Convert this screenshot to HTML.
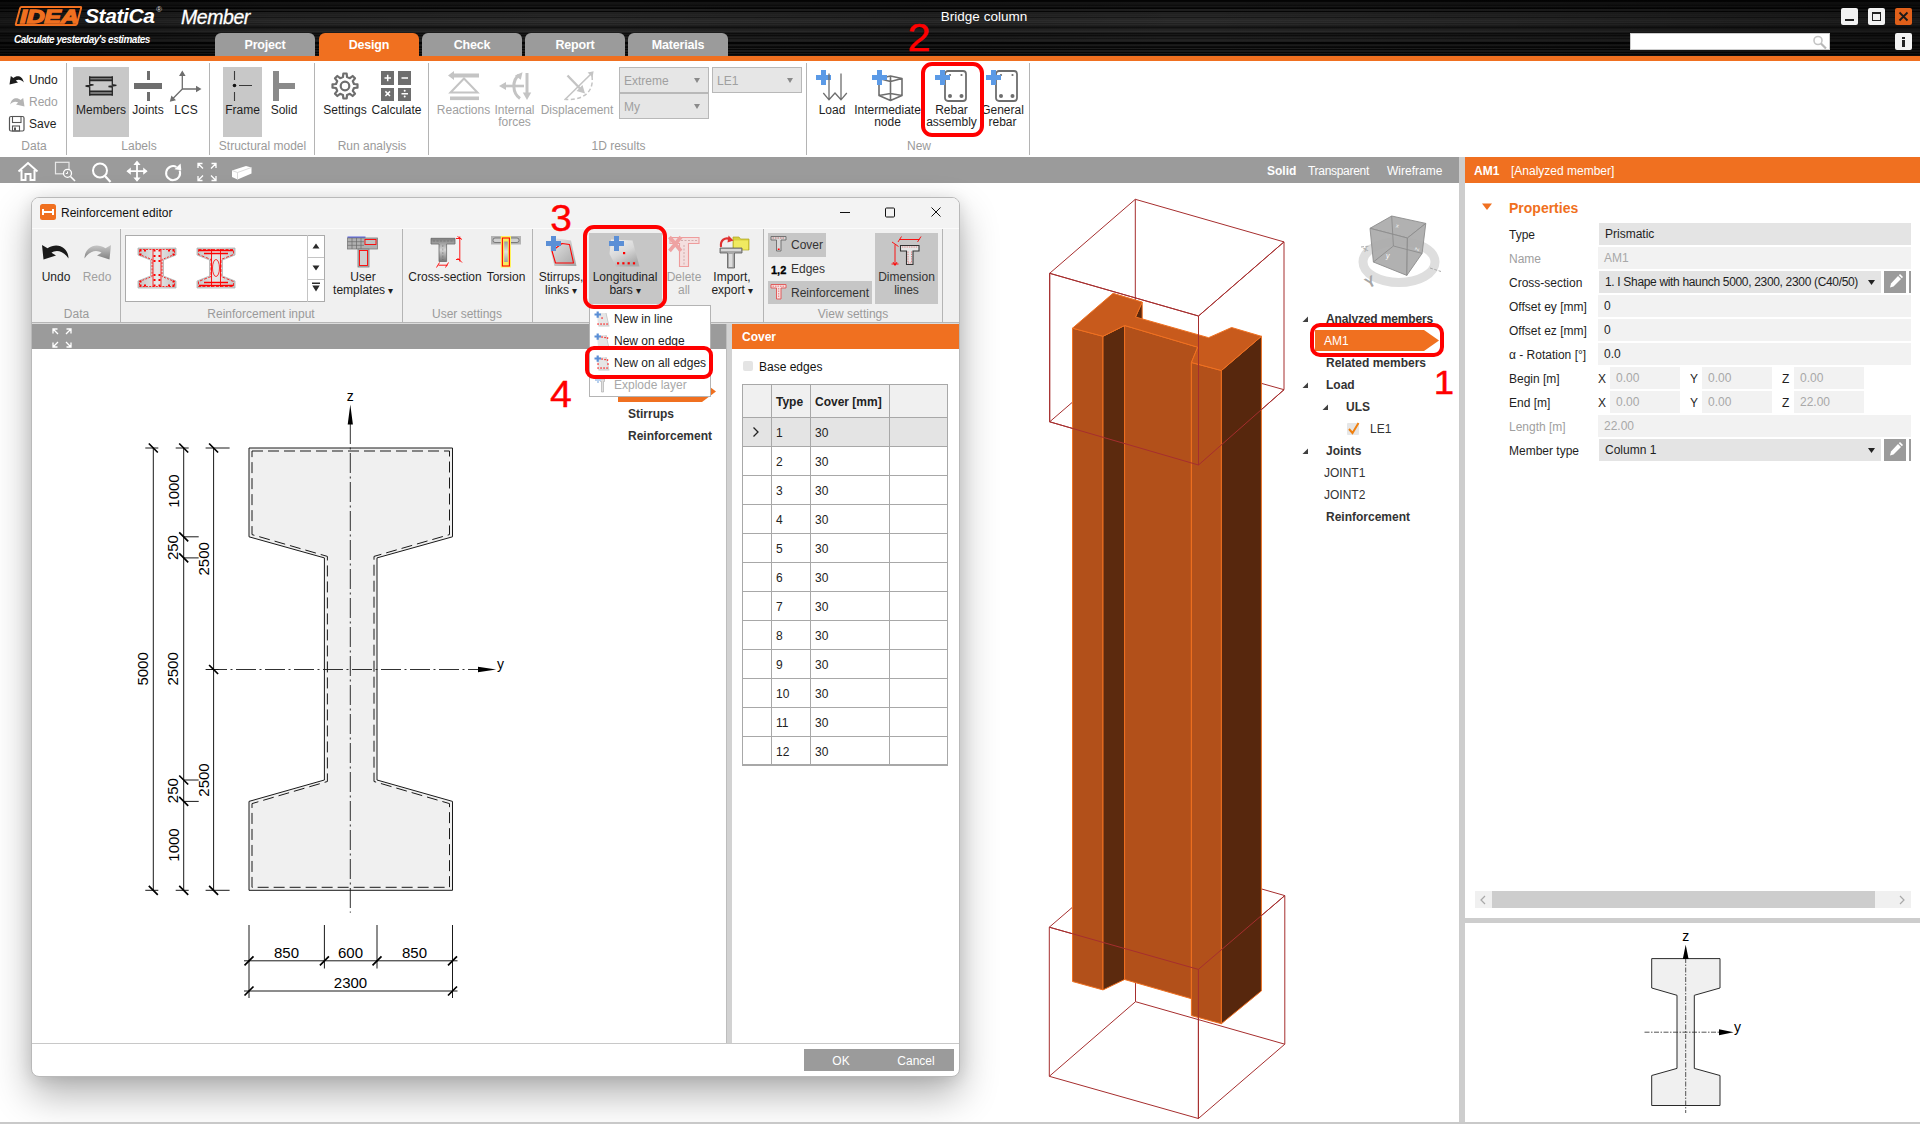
<!DOCTYPE html>
<html lang="en">
<head>
<meta charset="utf-8">
<title>IDEA StatiCa Member - Bridge column</title>
<style>
*{box-sizing:border-box;margin:0;padding:0}
html,body{width:1920px;height:1124px;overflow:hidden;background:#fff}
body{font-family:"Liberation Sans",sans-serif;font-size:12px;color:#1e1e1e;position:relative}
.abs{position:absolute}
.t{position:absolute;white-space:nowrap;line-height:14px}
.c{transform:translateX(-50%);text-align:center}
.g{color:#a0a0a0}
.b{font-weight:bold}
/* header */
#hdr{position:absolute;left:0;top:0;width:1920px;height:56px;background:#161616;background-image:linear-gradient(90deg,rgba(0,0,0,.45) 0,rgba(0,0,0,.1) 14%,rgba(0,0,0,0) 30%,rgba(0,0,0,.12) 48%,rgba(0,0,0,0) 62%,rgba(0,0,0,.15) 80%,rgba(0,0,0,.4) 100%),linear-gradient(180deg,#040404 0px,#040404 1px,#060606 1px,#060606 2px,#151515 2px,#151515 3px,#151515 3px,#151515 4px,#121212 4px,#121212 5px,#0d0d0d 5px,#0d0d0d 6px,#171717 6px,#171717 7px,#0b0b0b 7px,#0b0b0b 8px,#040404 8px,#040404 9px,#212121 9px,#212121 10px,#1d1d1d 10px,#1d1d1d 11px,#060606 11px,#060606 12px,#212121 12px,#212121 13px,#202020 13px,#202020 14px,#262626 14px,#262626 15px,#222222 15px,#222222 16px,#272727 16px,#272727 17px,#181818 17px,#181818 18px,#282828 18px,#282828 19px,#282828 19px,#282828 20px,#2e2e2e 20px,#2e2e2e 21px,#272727 21px,#272727 22px,#2e2e2e 22px,#2e2e2e 23px,#202020 23px,#202020 24px,#292929 24px,#292929 25px,#202020 25px,#202020 26px,#191919 26px,#191919 27px,#111111 27px,#111111 28px,#1b1b1b 28px,#1b1b1b 29px,#232323 29px,#232323 30px,#242424 30px,#242424 31px,#2b2b2b 31px,#2b2b2b 32px,#1d1d1d 32px,#1d1d1d 33px,#0d0d0d 33px,#0d0d0d 34px,#181818 34px,#181818 35px,#0d0d0d 35px,#0d0d0d 36px,#191919 36px,#191919 37px,#202020 37px,#202020 38px,#141414 38px,#141414 39px,#202020 39px,#202020 40px,#232323 40px,#232323 41px,#1e1e1e 41px,#1e1e1e 42px,#040404 42px,#040404 43px,#040404 43px,#040404 44px,#171717 44px,#171717 45px,#1c1c1c 45px,#1c1c1c 46px,#0c0c0c 46px,#0c0c0c 47px,#080808 47px,#080808 48px,#1e1e1e 48px,#1e1e1e 49px,#060606 49px,#060606 50px,#1c1c1c 50px,#1c1c1c 51px,#1b1b1b 51px,#1b1b1b 52px,#060606 52px,#060606 53px,#1b1b1b 53px,#1b1b1b 54px,#080808 54px,#080808 55px,#151515 55px,#151515 56px)}
#oline{position:absolute;left:0;top:56px;width:1920px;height:5px;background:#f07020}
.tab{position:absolute;top:33px;height:23px;width:100px;background:#9b9b9b;border-radius:6px 6px 0 0;color:#fff;font-weight:bold;font-size:12.500px;letter-spacing:-0.2px;text-align:center;line-height:24px}
.tab.on{background:#f07020;height:24px}
/* ribbon */
#rib{position:absolute;left:0;top:61px;width:1920px;height:96px;background:#fff}
.sep{position:absolute;width:1px;background:#b4b4b4}
.hl{position:absolute;background:#c8c8c8}
.glab{position:absolute;white-space:nowrap;color:#9a9a9a;transform:translateX(-50%);line-height:14px}
.dd{position:absolute;background:#e6e6e6;border:1px solid #b8b8b8;color:#a0a0a0;line-height:26px;padding-left:4px}
.dd i{position:absolute;right:8px;top:10px;width:0;height:0;border-left:3px solid transparent;border-right:3px solid transparent;border-top:5px solid #8a8a8a}
#tb{position:absolute;left:0;top:157px;width:1459px;height:26px;background:#9b9b9b}
#vsplit{position:absolute;left:1459px;top:157px;width:6px;height:967px;background:#cdcdcd}
#phdr{position:absolute;left:1465px;top:157px;width:455px;height:26px;background:#f07020;color:#fff}
#hsplit{position:absolute;left:1465px;top:918px;width:455px;height:5px;background:#cdcdcd}
#botline{position:absolute;left:0;top:1122px;width:1920px;height:2px;background:#c9c9c9}
.fld{position:absolute;height:22px;line-height:23px;padding-left:6px;white-space:nowrap}
.f1{background:#e4e4e4;color:#1e1e1e}
.f2{background:#f2f2f2;color:#1e1e1e}
.f3{background:#f2f2f2;color:#a8a8a8}
.lab{position:absolute;left:1509px;white-space:nowrap;line-height:14px}
.ebtn{position:absolute;left:1884px;width:22px;height:22px;background:#9b9b9b}
.ebar{position:absolute;left:1909px;width:2px;height:22px;background:#9b9b9b}
.red{color:#ff0000}
.rr{position:absolute;border:4px solid #ff0000}
/* dialog */
#dlg{position:absolute;left:31px;top:197px;width:929px;height:880px;background:#fff;border-radius:8px;border:1px solid #b9b9b9;
 box-shadow:0 18px 38px rgba(0,0,0,.30),0 2px 16px rgba(0,0,0,.11);overflow:hidden}
</style>
</head>
<body>
<!-- ================= HEADER ================= -->
<div id="hdr"></div>
<div id="oline"></div>

<div class="abs" style="left:16.500px;top:6px;width:63px;height:20px;border:2px solid #f07020;border-radius:2px;transform:skewX(-15deg)"></div>
<div class="t" style="left:20px;top:5.500px;font-size:19px;line-height:22px;font-weight:bold;font-style:italic;color:#f07020;letter-spacing:-0.2px;-webkit-text-stroke:1.300px #f07020;transform:scaleX(1.31);transform-origin:0 0">IDEA</div>
<div class="t" style="left:85px;top:3px;font-size:21px;line-height:26px;font-weight:bold;font-style:italic;color:#fff;letter-spacing:-0.4px">StatiCa</div>
<div class="t" style="left:156px;top:5px;font-size:8px;line-height:10px;color:#ddd;font-style:italic">®</div>
<div class="t" style="left:181px;top:3.500px;font-size:19.500px;line-height:26px;font-style:italic;color:#fff;letter-spacing:-0.45px;-webkit-text-stroke:.3px #fff">Member</div>
<div class="t" style="left:14px;top:34px;font-size:10px;line-height:12px;font-weight:bold;font-style:italic;color:#fff;letter-spacing:-0.48px">Calculate yesterday's estimates</div>
<div class="tab" style="left:215px">Project</div>
<div class="tab on" style="left:319px">Design</div>
<div class="tab" style="left:422px">Check</div>
<div class="tab" style="left:525px">Report</div>
<div class="tab" style="left:628px">Materials</div>
<div class="t" style="left:984px;top:10px;font-size:13.500px;color:#fff;transform:translateX(-50%)">Bridge column</div>
<!-- window buttons -->
<div class="abs" style="left:1841px;top:8px;width:17px;height:17px;background:#f2f2f2;border-radius:2px"></div>
<div class="abs" style="left:1845px;top:19px;width:9px;height:2px;background:#222"></div>
<div class="abs" style="left:1868px;top:8px;width:17px;height:17px;background:#f2f2f2;border-radius:2px"></div>
<div class="abs" style="left:1872px;top:12px;width:9px;height:9px;border:1px solid #222;border-top-width:2px"></div>
<div class="abs" style="left:1895px;top:8px;width:17px;height:17px;background:#e0601a;border-radius:2px"></div>
<svg class="abs" style="left:1895px;top:8px" width="17" height="17"><path d="M4.5 4.5L12.5 12.5M12.5 4.5L4.5 12.5" stroke="#1a1a1a" stroke-width="1.8"/></svg>
<div class="abs" style="left:1630px;top:33px;width:200px;height:17px;background:#fff;border:1px solid #ccc"></div>
<svg class="abs" style="left:1810px;top:33px" width="20" height="18"><circle cx="8" cy="7.5" r="4" fill="none" stroke="#c4c4c4" stroke-width="1.6"/><path d="M11 10.5L16 15.5" stroke="#b8b8b8" stroke-width="2.2"/></svg>
<div class="abs" style="left:1895px;top:33px;width:17px;height:17px;background:#f2f2f2;border-radius:2px"></div>
<div class="abs" style="left:1902px;top:37px;width:3px;height:2px;background:#222"></div>
<div class="abs" style="left:1902px;top:40px;width:3px;height:7px;background:#222"></div>

<!-- ================= RIBBON ================= -->
<div id="rib"></div>

<div class="sep" style="left:66px;top:63px;height:92px"></div>
<div class="sep" style="left:209px;top:63px;height:92px"></div>
<div class="sep" style="left:314px;top:63px;height:92px"></div>
<div class="sep" style="left:428px;top:63px;height:92px"></div>
<div class="sep" style="left:806px;top:63px;height:92px"></div>
<div class="sep" style="left:1029px;top:63px;height:92px"></div>
<div class="hl" style="left:73px;top:67px;width:56px;height:70px"></div>
<div class="hl" style="left:223px;top:67px;width:39px;height:70px"></div>
<!-- Data -->
<svg class="abs" style="left:8px;top:73px" width="18" height="14"><path d="M1.500 11.500L2.800 3L5.400 5C9 2 14.500 2.800 15.800 9.500C13.500 6.300 10 6 7.800 7.600L10 9.600Z" fill="#1c1c1c"/></svg>
<div class="t" style="left:29px;top:73px">Undo</div>
<svg class="abs" style="left:8px;top:95px" width="18" height="14"><path d="M16.500 11.500L15.200 3L12.600 5C9 2 3.500 2.800 2.200 9.500C4.500 6.300 8 6 10.200 7.600L8 9.600Z" fill="#b4b4b4"/></svg>
<div class="t g" style="left:29px;top:95px">Redo</div>
<svg class="abs" style="left:8px;top:115px" width="18" height="18"><rect x="1.5" y="1.5" width="14.5" height="14.5" rx="1.5" fill="none" stroke="#555" stroke-width="1.2"/><rect x="4.5" y="1.5" width="8.5" height="6" fill="none" stroke="#555" stroke-width="1.1"/><rect x="4.5" y="11" width="7" height="5" fill="none" stroke="#555" stroke-width="1.1"/><rect x="6" y="12.5" width="2" height="3" fill="#555"/></svg>
<div class="t" style="left:29px;top:117px">Save</div>
<div class="glab" style="left:34px;top:139px">Data</div>
<!-- Labels -->
<svg class="abs" style="left:84px;top:75px" width="34" height="22"><path d="M5.500 2.400H28.500M5.500 5.300H28.500M5.500 16.600H28.500M5.500 19.600H28.500" stroke="#262626" stroke-width="2"/><path d="M5.700 1.200V9.300L9.500 9.900L1.600 11L5.700 11.800V20.800M28.300 1.200V9.600L32.400 10.400L24.500 11.500L28.300 12.100V20.800" fill="none" stroke="#262626" stroke-width="1.300"/></svg>
<div class="t c" style="left:101px;top:103px">Members</div>
<div class="abs" style="left:134px;top:83px;width:28px;height:6px;background:#6e6e6e"></div>
<div class="abs" style="left:146.5px;top:71px;width:3px;height:9px;background:#6e6e6e"></div>
<div class="abs" style="left:146.5px;top:92px;width:3px;height:9px;background:#6e6e6e"></div>
<div class="t c" style="left:148px;top:103px">Joints</div>
<svg class="abs" style="left:168px;top:69px" width="36" height="36"><path d="M14.3 20V5M14.3 20H30M14.3 20L4 30.5" stroke="#6e6e6e" stroke-width="1.3" fill="none"/><path d="M14.3 1.5L17.6 7H11ZM33.5 20L28 23.3V16.7ZM1.8 32.8L3.4 26.6L8 31.2Z" fill="#6e6e6e"/></svg>
<div class="t c" style="left:186px;top:103px">LCS</div>
<div class="glab" style="left:139px;top:139px">Labels</div>
<!-- Structural model -->
<svg class="abs" style="left:226px;top:69px" width="32" height="34"><path d="M8.5 2V11M8.5 23V32M13 16.5H26" stroke="#3a3a3a" stroke-width="1.1"/><circle cx="8.5" cy="16.5" r="1.8" fill="#111"/></svg>
<div class="t c" style="left:242.5px;top:103px">Frame</div>
<div class="abs" style="left:273px;top:71px;width:6px;height:30px;background:#8a8a8a"></div>
<div class="abs" style="left:279px;top:83px;width:16px;height:6px;background:#8a8a8a"></div>
<div class="t c" style="left:284px;top:103px">Solid</div>
<div class="glab" style="left:262.5px;top:139px">Structural model</div>
<!-- Run analysis -->
<svg class="abs" style="left:330px;top:71px" width="30" height="30"><path d="M12.97 6.03L13.34 2.51L16.66 2.51L17.03 6.03L19.91 7.22L22.66 5.00L25.00 7.34L22.78 10.09L23.97 12.97L27.49 13.34L27.49 16.66L23.97 17.03L22.78 19.91L25.00 22.66L22.66 25.00L19.91 22.78L17.03 23.97L16.66 27.49L13.34 27.49L12.97 23.97L10.09 22.78L7.34 25.00L5.00 22.66L7.22 19.91L6.03 17.03L2.51 16.66L2.51 13.34L6.03 12.97L7.22 10.09L5.00 7.34L7.34 5.00L10.09 7.22Z" fill="none" stroke="#6e6e6e" stroke-width="2.200" stroke-linejoin="round"/><circle cx="15" cy="15" r="4.300" fill="none" stroke="#6e6e6e" stroke-width="2.200"/></svg>
<div class="t c" style="left:345px;top:103px">Settings</div>
<div class="abs" style="left:381px;top:71px;width:13px;height:13.5px;background:#6e6e6e"></div>
<div class="abs" style="left:398px;top:71px;width:13px;height:13.5px;background:#6e6e6e"></div>
<div class="abs" style="left:381px;top:87.5px;width:13px;height:13.5px;background:#6e6e6e"></div>
<div class="abs" style="left:398px;top:87.5px;width:13px;height:13.5px;background:#6e6e6e"></div>
<svg class="abs" style="left:381px;top:71px" width="30" height="30"><path d="M3.5 7H10M6.7 3.8V10.2M20.5 7H27M4.4 20.4L9 25M9 20.4L4.4 25M20.5 22.7H27" stroke="#fff" stroke-width="1.5"/><circle cx="23.7" cy="19.8" r="1" fill="#fff"/><circle cx="23.7" cy="25.6" r="1" fill="#fff"/></svg>
<div class="t c" style="left:396.5px;top:103px">Calculate</div>
<div class="glab" style="left:372px;top:139px">Run analysis</div>
<!-- 1D results -->
<svg class="abs" style="left:447px;top:69px" width="34" height="34"><path d="M7 4.5H32V8.5H7V11L1 6.5L7 2Z" fill="#c4c4c4"/><path d="M3.5 23.5L17 9.5L30.5 23.5Z" fill="none" stroke="#c4c4c4" stroke-width="2"/><rect x="3" y="27.5" width="29" height="3.6" fill="#c4c4c4"/></svg>
<div class="t c g" style="left:463.5px;top:103px">Reactions</div>
<svg class="abs" style="left:498px;top:69px" width="36" height="34"><path d="M29 4V26" stroke="#c4c4c4" stroke-width="3"/><path d="M29 31L24.8 23.5H33.2Z" fill="#c4c4c4"/><path d="M6 17H26" stroke="#c4c4c4" stroke-width="2.6"/><path d="M1 17L8 13V21Z" fill="#c4c4c4"/><path d="M22 29.5C14 24 14 11 21 6" fill="none" stroke="#c4c4c4" stroke-width="3"/><path d="M24.5 3.2L17 6.5L22.8 10.8Z" fill="#c4c4c4"/></svg>
<div class="t c g" style="left:514.5px;top:103px;line-height:12px;top:104px">Internal<br>forces</div>
<svg class="abs" style="left:561px;top:69px" width="36" height="36"><path d="M3.5 31L31 4" stroke="#c4c4c4" stroke-width="1.6"/><path d="M32.6 2.2L31.6 8.2L26.6 3.4Z" fill="#c4c4c4"/><path d="M6.5 6.5L19.5 20" stroke="#c4c4c4" stroke-width="2.4"/><path d="M24 24.5L15.5 22L21.5 16Z" fill="#c4c4c4"/><path d="M31 7C33 22 24 31 5 30.5" fill="none" stroke="#c4c4c4" stroke-width="1.5" stroke-dasharray="4 2.5"/></svg>
<div class="t c g" style="left:577px;top:103px">Displacement</div>
<div class="dd" style="left:619px;top:67px;width:90px;height:26px">Extreme<i></i></div>
<div class="dd" style="left:619px;top:93px;width:90px;height:26px">My<i></i></div>
<div class="dd" style="left:712px;top:67px;width:90px;height:26px">LE1<i></i></div>
<div class="glab" style="left:618.5px;top:139px">1D results</div>
<!-- New -->
<div class="abs" style="left:816px;top:75.0px;width:14.5px;height:4.5px;background:#5b9ae6"></div><div class="abs" style="left:821.0px;top:70px;width:4.5px;height:14.5px;background:#5b9ae6"></div>
<svg class="abs" style="left:820px;top:72px" width="30" height="30"><path d="M9 1.5V27M21 1.5V27M3.3 21L9 27.8L15 21L21 27.8L26.8 21" fill="none" stroke="#6e6e6e" stroke-width="1.3"/></svg>
<div class="t c" style="left:832px;top:103px">Load</div>
<svg class="abs" style="left:876px;top:72px" width="30" height="30"><path d="M3 6.5L14.5 4L26 6.5V23.5L14.5 28.5L3 23.5ZM3 6.5L14.5 9.5L26 6.5M14.5 9.5V28.5M14.5 4V21.5L3 23.5M14.5 21.5L26 23.5" fill="none" stroke="#6e6e6e" stroke-width="1.600" stroke-linejoin="round"/></svg>
<div class="abs" style="left:872px;top:75.0px;width:14.5px;height:4.5px;background:#5b9ae6"></div><div class="abs" style="left:877.0px;top:70px;width:4.5px;height:14.5px;background:#5b9ae6"></div>
<div class="t c" style="left:887.5px;top:104px;line-height:12px">Intermediate<br>node</div>
<svg class="abs" style="left:943px;top:69px" width="26" height="34"><rect x="2" y="2" width="21" height="30" rx="3" fill="none" stroke="#6e6e6e" stroke-width="1.800"/><circle cx="7" cy="27" r="2" fill="#6e6e6e"/><circle cx="18.5" cy="27" r="2" fill="#6e6e6e"/><circle cx="7" cy="6" r="1.1" fill="#6e6e6e"/><circle cx="18.5" cy="6" r="1.1" fill="#6e6e6e"/></svg>
<div class="abs" style="left:935px;top:75.0px;width:14.5px;height:4.5px;background:#5b9ae6"></div><div class="abs" style="left:940.0px;top:70px;width:4.5px;height:14.5px;background:#5b9ae6"></div>
<div class="t c" style="left:951.5px;top:104px;line-height:12px">Rebar<br>assembly</div>
<svg class="abs" style="left:994px;top:69px" width="26" height="34"><rect x="2" y="2" width="21" height="30" rx="3" fill="none" stroke="#6e6e6e" stroke-width="1.800"/><circle cx="7" cy="27" r="2" fill="#6e6e6e"/><circle cx="18.5" cy="27" r="2" fill="#6e6e6e"/><circle cx="7" cy="6" r="1.1" fill="#6e6e6e"/><circle cx="18.5" cy="6" r="1.1" fill="#6e6e6e"/></svg>
<div class="abs" style="left:986px;top:75.0px;width:14.5px;height:4.5px;background:#5b9ae6"></div><div class="abs" style="left:991.0px;top:70px;width:4.5px;height:14.5px;background:#5b9ae6"></div>
<div class="t c" style="left:1002.5px;top:104px;line-height:12px">General<br>rebar</div>
<div class="glab" style="left:919px;top:139px">New</div>

<!-- ================= TOOLBAR / PANELS ================= -->
<div id="tb"></div>
<div id="vsplit"></div>
<div id="phdr"></div>
<div id="hsplit"></div>

<!-- toolbar icons -->
<svg class="abs" style="left:16px;top:160px" width="24" height="22"><path d="M2.5 11.5L12 3L21.5 11.5M5.5 10V20H9.5V14H14.5V20H18.5V10" fill="none" stroke="#fff" stroke-width="2"/></svg>
<svg class="abs" style="left:53px;top:160px" width="24" height="22"><rect x="2.5" y="2.3" width="13.5" height="11.5" fill="none" stroke="#e8e8e8" stroke-width="1.2"/><circle cx="14.5" cy="13.3" r="4" fill="#9b9b9b" stroke="#fff" stroke-width="1.3"/><path d="M17.5 16.5L22 21" stroke="#fff" stroke-width="1.6"/><path d="M14.5 11.5V13.5H12.8" stroke="#fff" stroke-width="1" fill="none"/></svg>
<svg class="abs" style="left:90px;top:160px" width="24" height="24"><circle cx="10" cy="10.5" r="7" fill="none" stroke="#fff" stroke-width="2"/><path d="M15 16L20.5 22" stroke="#fff" stroke-width="2.2"/></svg>
<svg class="abs" style="left:126px;top:160px" width="24" height="24"><path d="M11 2V20.5M1.8 11.2H20.3" stroke="#fff" stroke-width="1.8"/><path d="M11 0.6L14.6 5H7.4ZM11 21.8L14.6 17.4H7.4ZM0.4 11.2L4.8 7.6V14.8ZM21.6 11.2L17.2 7.6V14.8Z" fill="#fff"/></svg>
<svg class="abs" style="left:162px;top:160px" width="24" height="24"><path d="M17.6 10.5A7 7 0 1 1 14.5 7" fill="none" stroke="#fff" stroke-width="2"/><path d="M12.5 9.2L19.3 10.3L18.6 3.4Z" fill="#fff"/></svg>
<svg class="abs" style="left:196px;top:161px" width="22" height="22"><path d="M2 7V2.5H6.5M2.5 3L7 7.5M20 7V2.5H15.5M19.5 3L15 7.5M2 15V19.5H6.5M2.5 19L7 14.5M20 15V19.5H15.5M19.5 19L15 14.5" fill="none" stroke="#fff" stroke-width="1.3"/></svg>
<svg class="abs" style="left:231px;top:164px" width="22" height="18"><path d="M1 6.5L15 2L20.5 3.5V9.5L6.5 15.5L1 13Z" fill="#fff"/><path d="M1 6.5L6.5 8.5L20.5 3.5M6.5 8.5V15.5" fill="none" stroke="#d0d0d0" stroke-width=".8"/></svg>
<div class="t b" style="left:1267px;top:164px;color:#fff">Solid</div>
<div class="t" style="left:1308px;top:164px;color:#fff;letter-spacing:-0.3px">Transparent</div>
<div class="t" style="left:1387px;top:164px;color:#fff">Wireframe</div>
<div class="t b" style="left:1474px;top:164px;color:#fff">AM1</div>
<div class="t" style="left:1511px;top:164px;color:#fff">[Analyzed member]</div>
<!-- 3D model -->
<svg class="abs" style="left:1030px;top:183px" width="430" height="941" viewBox="1030 183 430 941">
 <g fill="none" stroke="#a62e2e" stroke-width="1">
  <path d="M1135.3 199.3L1284 241.9L1198.5 316L1049.7 273.3ZM1049.7 273.3V421.8L1198.5 465L1284 389.7V241.9M1198.5 316V465M1135.3 199.3V348L1049.7 421.8M1135.3 348L1284 389.7"/>
  <path d="M1135.5 853L1284.8 895.6L1198.4 969.4L1049.3 927.2ZM1049.3 927.2V1076.3L1198.4 1118.5L1284.8 1044.2V895.6M1198.4 969.4V1118.5M1135.5 853V1001.7L1049.3 1076.3M1135.5 1001.7L1284.8 1044.2"/>
 </g>
 <g stroke="#f07020" stroke-width="1" stroke-linejoin="round">
  <path d="M1135.5 317L1142.2 302.1V955L1135.5 970Z" fill="#5a280e"/>
  <path d="M1072.5 328.2L1103 336.3V989.9L1072.5 981.5Z" fill="#b2501a"/>
  <path d="M1103 336.3L1124.6 325.5V979.5L1103 989.9Z" fill="#5c2a0e"/>
  <path d="M1124.6 325.5L1197.7 347.2L1191.4 362.5V998.7L1124.6 979.5Z" fill="#b2501a"/>
  <path d="M1191.4 362.5L1221.4 370.5V1023.7L1191.4 1015.6Z" fill="#b2501a"/>
  <path d="M1221.4 370.5L1261.4 336.3V990.9L1221.4 1023.7Z" fill="#57270d"/>
  <path d="M1113.1 293.3L1142.2 302.1L1135.5 317L1208.6 337.7L1231.6 327.5L1261.4 336.3L1221.4 370.5L1191.4 362.5L1197.7 347.2L1124.6 325.5L1103 336.3L1072.5 328.2Z" fill="#c85a1c"/>
 </g>
 <g fill="none" stroke="#a62e2e" stroke-width="1">
  <path d="M1049.7 273.3L1198.5 316L1284 241.9M1198.5 316V465L1049.7 421.8V273.3M1198.5 465L1284 389.7"/>
  <path d="M1049.3 927.2L1198.4 969.4L1284.8 895.6M1198.4 969.4V1118.5"/>
 </g>
 <!-- nav cube -->
 <ellipse cx="1399" cy="262" rx="36" ry="20.5" fill="none" stroke="#dedede" stroke-width="9"/>
 <g fill="#aaaaaa" fill-opacity=".92" stroke="#8c8c8c" stroke-width=".9" stroke-linejoin="round">
  <path d="M1391.7 216L1425.8 223.4L1407.4 238L1370 228.3Z"/>
  <path d="M1370 228.3L1407.4 238L1406.8 275.4L1373.4 262Z"/>
  <path d="M1407.4 238L1425.8 223.4L1422.1 253.4L1406.8 275.4Z"/>
  <path d="M1391.7 216L1393.4 246L1373.4 262M1393.4 246L1422.1 253.4" fill="none"/>
 </g>
 <path d="M1361 247L1370 246M1430 268L1441 271.5" stroke="#aaa" stroke-width="1" stroke-dasharray="3 1.5"/>
 <text x="1386" y="258" font-size="7" fill="#fff" font-family="Liberation Sans, sans-serif" font-style="italic">y</text>
 <text x="1415" y="251" font-size="7" fill="#eee" font-family="Liberation Sans, sans-serif" transform="rotate(-70 1417 249)">z</text>
 <text x="1396" y="228" font-size="6" fill="#eee" font-family="Liberation Sans, sans-serif" transform="rotate(15 1399 226)">x</text>
 <text x="1365" y="286" font-size="15" fill="#a6a6a6" font-weight="bold" font-family="Liberation Sans, sans-serif" transform="rotate(-28 1372 281)">Y</text>
 <text x="1363" y="251" font-size="8" fill="#b0b0b0" font-weight="bold" font-family="Liberation Sans, sans-serif" transform="rotate(-20 1367 248)">x</text>
</svg>
<!-- tree -->
<svg class="abs" style="left:1300px;top:310px" width="60" height="150"><g fill="#404040"><path d="M8 6.5V12H2.5Z"/><path d="M8 72.5V78H2.5Z"/><path d="M28 94.500V100H22.5Z"/><path d="M8 138.5V144H2.500Z"/></g></svg>
<div class="t b" style="left:1326px;top:312px;color:#333;letter-spacing:-0.15px">Analyzed members</div>
<svg class="abs" style="left:1315px;top:330px" width="126" height="22"><path d="M0 0H109L124 10.500L109 21H0Z" fill="#f07020"/></svg>
<div class="t" style="left:1324px;top:334px;color:#fff">AM1</div>
<div class="t b" style="left:1326px;top:356px;color:#333">Related members</div>
<div class="t b" style="left:1326px;top:378px;color:#333">Load</div>
<div class="t b" style="left:1346px;top:400px;color:#333">ULS</div>
<div class="abs" style="left:1347px;top:423px;width:12px;height:12px;background:#e6e6e6;border-radius:1px"></div>
<svg class="abs" style="left:1346px;top:420px" width="16" height="16"><path d="M3 9L6.500 13L12.500 3" fill="none" stroke="#f08010" stroke-width="2"/></svg>
<div class="t" style="left:1370px;top:422px;color:#333">LE1</div>
<div class="t b" style="left:1326px;top:444px;color:#333">Joints</div>
<div class="t" style="left:1324px;top:466px;color:#333">JOINT1</div>
<div class="t" style="left:1324px;top:488px;color:#333">JOINT2</div>
<div class="t b" style="left:1326px;top:510px;color:#333">Reinforcement</div>


<svg class="abs" style="left:1481px;top:202px" width="12" height="10"><path d="M1 1.500H11L6 8Z" fill="#f07020"/></svg>
<div class="t b" style="left:1509px;top:199px;font-size:14px;line-height:18px;color:#f07020">Properties</div>
<div class="lab" style="top:228px">Type</div>
<div class="lab g" style="top:252px">Name</div>
<div class="lab" style="top:276px">Cross-section</div>
<div class="lab" style="top:300px">Offset ey [mm]</div>
<div class="lab" style="top:324px">Offset ez [mm]</div>
<div class="lab" style="top:348px">α - Rotation [°]</div>
<div class="lab" style="top:372px">Begin [m]</div>
<div class="lab" style="top:396px">End [m]</div>
<div class="lab g" style="top:420px">Length [m]</div>
<div class="lab" style="top:444px">Member type</div>
<div class="fld f1" style="left:1599px;top:223px;width:312px">Prismatic</div>
<div class="fld f3" style="left:1598px;top:247px;width:313px">AM1</div>
<div class="fld f1" style="left:1599px;top:271px;width:282px;letter-spacing:-0.33px">1. I Shape with haunch 5000, 2300, 2300 (C40/50)</div>
<div class="fld f2" style="left:1598px;top:295px;width:313px">0</div>
<div class="fld f2" style="left:1598px;top:319px;width:313px">0</div>
<div class="fld f2" style="left:1598px;top:343px;width:313px">0.0</div>
<div class="t" style="left:1598px;top:372px">X</div><div class="fld f3" style="left:1610px;top:367px;width:70px">0.00</div>
<div class="t" style="left:1690px;top:372px">Y</div><div class="fld f3" style="left:1702px;top:367px;width:70px">0.00</div>
<div class="t" style="left:1782px;top:372px">Z</div><div class="fld f3" style="left:1794px;top:367px;width:70px">0.00</div>
<div class="t" style="left:1598px;top:396px">X</div><div class="fld f3" style="left:1610px;top:391px;width:70px">0.00</div>
<div class="t" style="left:1690px;top:396px">Y</div><div class="fld f3" style="left:1702px;top:391px;width:70px">0.00</div>
<div class="t" style="left:1782px;top:396px">Z</div><div class="fld f3" style="left:1794px;top:391px;width:70px">22.00</div>
<div class="fld f3" style="left:1598px;top:415px;width:313px">22.00</div>
<div class="fld f1" style="left:1599px;top:439px;width:282px">Column 1</div>
<svg class="abs" style="left:1867px;top:279px" width="10" height="8"><path d="M1 1H8L4.500 6Z" fill="#222"/></svg><div class="ebtn" style="top:271px"></div><div class="ebar" style="top:271px"></div><svg class="abs" style="left:1884px;top:271px" width="22" height="22"><path d="M6 16.500L7 12.500L14 5L17 8L9.500 15.500Z" fill="#fff"/><path d="M14.800 4.200L16 3L19 6L17.800 7.200Z" fill="#fff"/></svg><svg class="abs" style="left:1867px;top:447px" width="10" height="8"><path d="M1 1H8L4.500 6Z" fill="#222"/></svg><div class="ebtn" style="top:439px"></div><div class="ebar" style="top:439px"></div><svg class="abs" style="left:1884px;top:439px" width="22" height="22"><path d="M6 16.500L7 12.500L14 5L17 8L9.500 15.500Z" fill="#fff"/><path d="M14.800 4.200L16 3L19 6L17.800 7.200Z" fill="#fff"/></svg>
<div class="abs" style="left:1475px;top:891px;width:436px;height:17px;background:#f0f0f0"></div>
<div class="abs" style="left:1492px;top:891px;width:383px;height:17px;background:#cdcdcd"></div>
<svg class="abs" style="left:1477px;top:894px" width="12" height="12"><path d="M8 2L4 6L8 10" fill="none" stroke="#a8a8a8" stroke-width="1.200"/></svg>
<svg class="abs" style="left:1896px;top:894px" width="12" height="12"><path d="M4 2L8 6L4 10" fill="none" stroke="#a8a8a8" stroke-width="1.200"/></svg>
<!-- preview -->
<svg class="abs" style="left:1630px;top:925px" width="130" height="195" viewBox="1630 925 130 195">
 <path d="M1651.700 958.600H1720V988L1694.300 995.300V1068.400L1720 1075.500V1105.500H1651.700V1075.500L1677 1068.400V995.300L1651.700 988Z" fill="#f0f0f0" stroke="#2a2a2a" stroke-width="1"/>
 <path d="M1685.700 958V1113M1644.500 1032.200H1722" stroke="#2a2a2a" stroke-width=".8" stroke-dasharray="5 1.500 1.500 1.500"/>
 <path d="M1685.700 944.700L1688.600 959H1682.800ZM1733.600 1032.200L1719 1035.200V1029.200Z" fill="#000"/>
 <text x="1685.700" y="941" font-size="14" text-anchor="middle" font-family="Liberation Sans, sans-serif" fill="#000">z</text>
 <text x="1734" y="1032" font-size="14" font-family="Liberation Sans, sans-serif" fill="#000">y</text>
</svg>


<div id="dlg"><div class="abs" style="left:-32px;top:-198px;width:1920px;height:1124px">
<div class="abs" style="left:32px;top:198px;width:928px;height:30px;background:#f3f3f3"></div>
<div class="abs" style="left:32px;top:228px;width:928px;height:94px;background:#f0f0f0"></div>
<div class="abs" style="left:32px;top:228px;width:928px;height:1px;background:#fbfbfb"></div><div class="abs" style="left:32px;top:322px;width:928px;height:1px;background:#b6b6b6"></div>
<div class="abs" style="left:32px;top:323px;width:928px;height:1px;background:#dcdcdc"></div>
<div class="abs" style="left:32px;top:324px;width:694px;height:24.5px;background:#9b9b9b"></div>
<div class="abs" style="left:726px;top:324px;width:6px;height:719px;background:#d2d2d2;border-left:1px solid #bdbdbd"></div>
<div class="abs" style="left:732px;top:324px;width:228px;height:24.5px;background:#f07020"></div>
<div class="t b" style="left:742px;top:330px;color:#fff">Cover</div>
<div class="abs" style="left:32px;top:1043px;width:928px;height:1px;background:#c8c8c8"></div>
<!-- title -->
<div class="abs" style="left:40px;top:204px;width:16px;height:16px;background:#f07020;border-radius:2.500px"></div>
<div class="abs" style="left:43px;top:211px;width:10px;height:2px;background:#fff"></div>
<div class="abs" style="left:42px;top:209px;width:2px;height:6px;background:#fff"></div>
<div class="abs" style="left:52px;top:209px;width:2px;height:6px;background:#fff"></div>
<div class="t" style="left:61px;top:206px;color:#111">Reinforcement editor</div>
<svg class="abs" style="left:835px;top:203px" width="110" height="20"><path d="M5 9.5H15" stroke="#111" stroke-width="1"/><rect x="50.500" y="5" width="9" height="9" rx="1" fill="none" stroke="#111" stroke-width="1"/><path d="M96.500 4.500L105.500 13.500M105.500 4.500L96.500 13.500" stroke="#111" stroke-width="1"/></svg>
<!-- ribbon separators -->
<div class="sep" style="left:120px;top:229px;height:93px"></div>
<div class="sep" style="left:402px;top:229px;height:93px"></div>
<div class="sep" style="left:532px;top:229px;height:93px"></div>
<div class="sep" style="left:763px;top:229px;height:93px"></div>
<div class="sep" style="left:942px;top:229px;height:93px"></div>
<!-- undo/redo -->
<svg class="abs" style="left:40px;top:241px" width="32" height="22"><path d="M2 4L3.500 18.500L16 14.500L11.500 11.800C15.500 8.500 23 9 28.500 17.500C28.500 7 18 0.500 7.500 7.200Z" fill="#1a1a1a"/></svg>
<svg class="abs" style="left:81px;top:241px" width="32" height="22"><defs><linearGradient id="gr1" x1="0" y1="0" x2="0" y2="1"><stop offset="0" stop-color="#c8c8c8"/><stop offset="1" stop-color="#808080"/></linearGradient></defs><path d="M30 4L28.500 18.500L16 14.500L20.500 11.800C16.500 8.500 9 9 3.500 17.500C3.500 7 14 0.500 24.500 7.200Z" fill="url(#gr1)"/></svg>
<div class="t c" style="left:56px;top:270px">Undo</div>
<div class="t c g" style="left:97px;top:270px">Redo</div>
<div class="glab" style="left:76.500px;top:307px">Data</div>
<!-- gallery -->
<div class="abs" style="left:125px;top:235px;width:200px;height:67px;background:#fff;border:1px solid #ababab"></div>
<div class="abs" style="left:307px;top:235px;width:1px;height:67px;background:#c4c4c4"></div>
<div class="abs" style="left:307px;top:257px;width:17px;height:1px;background:#c4c4c4"></div>
<div class="abs" style="left:307px;top:279px;width:17px;height:1px;background:#c4c4c4"></div>
<svg class="abs" style="left:308px;top:236px" width="16" height="66"><path d="M4.500 12.500L8 7.500L11.500 12.500ZM4.500 29.500L8 34.500L11.500 29.500ZM4 46.500H12V48H4ZM4.300 49.500L8 55.500L11.700 49.500Z" fill="#2a2a2a"/></svg>
<svg class="abs" style="left:137px;top:247px" width="40" height="42"><defs><linearGradient id="gt1" x1="0" y1="0" x2="1" y2="0"><stop offset="0" stop-color="#c4c4c4"/><stop offset=".5" stop-color="#e8e8e8"/><stop offset="1" stop-color="#c4c4c4"/></linearGradient></defs><path d="M1 1H39V8L26.500 13V29L39 34V41H1V34L13.500 29V13L1 8Z" fill="url(#gt1)" stroke="#b0b0b0" stroke-width=".8"/><path d="M2.500 2.500H37.500V7.500L25 12.500V29.500L37.500 34.500V39.500H2.500V34.500L15 29.500V12.500L2.500 7.500Z" fill="none" stroke="#ff0000" stroke-width=".8" stroke-dasharray="2 1.300"/><path d="M16 2V40M24 2V40" stroke="#ff0000" stroke-width=".8"/><rect x="2.5" y="2.5" width="2" height="2" fill="#ff0000"/><rect x="7" y="2.5" width="2" height="2" fill="#ff0000"/><rect x="16.5" y="2.5" width="2" height="2" fill="#ff0000"/><rect x="21.5" y="2.5" width="2" height="2" fill="#ff0000"/><rect x="31" y="2.5" width="2" height="2" fill="#ff0000"/><rect x="35.5" y="2.5" width="2" height="2" fill="#ff0000"/><rect x="2.5" y="6.5" width="2" height="2" fill="#ff0000"/><rect x="35.5" y="6.5" width="2" height="2" fill="#ff0000"/><rect x="16.5" y="8" width="2" height="2" fill="#ff0000"/><rect x="21.5" y="8" width="2" height="2" fill="#ff0000"/><rect x="16.5" y="13" width="2" height="2" fill="#ff0000"/><rect x="21.5" y="13" width="2" height="2" fill="#ff0000"/><rect x="16.5" y="27" width="2" height="2" fill="#ff0000"/><rect x="21.5" y="27" width="2" height="2" fill="#ff0000"/><rect x="16.5" y="32" width="2" height="2" fill="#ff0000"/><rect x="21.5" y="32" width="2" height="2" fill="#ff0000"/><rect x="2.5" y="33.5" width="2" height="2" fill="#ff0000"/><rect x="35.5" y="33.5" width="2" height="2" fill="#ff0000"/><rect x="2.5" y="37.5" width="2" height="2" fill="#ff0000"/><rect x="7" y="37.5" width="2" height="2" fill="#ff0000"/><rect x="16.5" y="37.5" width="2" height="2" fill="#ff0000"/><rect x="21.5" y="37.5" width="2" height="2" fill="#ff0000"/><rect x="31" y="37.5" width="2" height="2" fill="#ff0000"/><rect x="35.5" y="37.5" width="2" height="2" fill="#ff0000"/></svg>
<svg class="abs" style="left:196px;top:247px" width="40" height="42"><defs><linearGradient id="gt2" x1="0" y1="0" x2="1" y2="0"><stop offset="0" stop-color="#c4c4c4"/><stop offset=".5" stop-color="#e8e8e8"/><stop offset="1" stop-color="#c4c4c4"/></linearGradient></defs><path d="M1 1H39V8L26.500 13V29L39 34V41H1V34L13.500 29V13L1 8Z" fill="url(#gt2)" stroke="#b0b0b0" stroke-width=".8"/><path d="M3 3.500H37M8 6.500H32M8 35.500H32M3 38.500H37" stroke="#ff0000" stroke-width="1.500"/><path d="M15.500 2V40M24.500 2V40" stroke="#ff0000" stroke-width=".9"/><path d="M2.500 2.500H37.500V7.500L25 12.500V29.500L37.500 34.500V39.500H2.500V34.500L15 29.500V12.500L2.500 7.500Z" fill="none" stroke="#ff0000" stroke-width=".8" stroke-dasharray="3 1.500"/><ellipse cx="20" cy="21" rx="3.500" ry="8.500" fill="none" stroke="#ff0000" stroke-width=".8"/></svg>
<!-- user templates -->
<svg class="abs" style="left:346px;top:235px" width="34" height="34"><rect x="1.500" y="1.500" width="18" height="1.500" fill="#5a64e0"/><rect x="1.500" y="3" width="30" height="11" fill="#b0b0b0" stroke="#7a7a7a" stroke-width=".8"/><path d="M1.500 6.700H18M1.500 10.300H18M6 3V14M10.500 3V14M15 3V14" stroke="#6a6a6a" stroke-width=".7"/><rect x="19" y="4.500" width="11" height="5" fill="#c0c0c0" stroke="#ff0000" stroke-width=".9"/><rect x="12" y="14" width="11" height="18" fill="#b8b8b8" stroke="#7a7a7a" stroke-width=".8"/><rect x="13.500" y="15.500" width="8" height="15" fill="#d0d0d0" stroke="#ff0000" stroke-width=".9"/></svg>
<div class="t c" style="left:363px;top:271px;line-height:13px">User<br>templates<span style="font-size:10px"> ▾</span></div>
<div class="glab" style="left:261px;top:307px">Reinforcement input</div>
<!-- user settings -->
<svg class="abs" style="left:430px;top:235px" width="34" height="36"><defs><linearGradient id="gr2" x1="0" y1="0" x2="0" y2="1"><stop offset="0" stop-color="#7c7c7c"/><stop offset=".5" stop-color="#d4d4d4"/><stop offset="1" stop-color="#747474"/></linearGradient></defs><path d="M1 3.300H25V9H16.600V26.500H9V9H1Z" fill="url(#gr2)" stroke="#6a6a6a" stroke-width=".8"/><path d="M3 6H23M12.800 10V25" stroke="#5a5a5a" stroke-width=".7" stroke-dasharray="2 1.500" opacity=".6"/><path d="M29.800 1.500V26.500M26 3.500H29.800M27.500 1.500L32 4.500M26 24.500H29.800M27.500 23L32 27.500M8.500 30.200H17.500M9.500 27.500L6.500 32.500M18.500 27.500L15.500 32.500" fill="none" stroke="#ff0000" stroke-width=".9"/></svg>
<div class="t c" style="left:445px;top:270px">Cross-section</div>
<svg class="abs" style="left:489px;top:235px" width="34" height="34"><defs><linearGradient id="gr3" x1="0" y1="0" x2="0" y2="1"><stop offset="0" stop-color="#9a9a9a"/><stop offset=".5" stop-color="#e0e0e0"/><stop offset="1" stop-color="#a0a0a0"/></linearGradient></defs><rect x="2" y="1" width="30" height="8.500" fill="#b4b4b4"/><rect x="4" y="3" width="26" height="4.500" rx="2" fill="#cfcfcf" stroke="#707070" stroke-width=".9"/><rect x="11.800" y="1" width="10.200" height="31.500" fill="#fff45a"/><rect x="13.400" y="3" width="7" height="28" fill="#f4ec60" stroke="#ff0000" stroke-width="1.100"/><rect x="15.200" y="6.500" width="3.600" height="20.500" fill="url(#gr3)"/></svg>
<div class="t c" style="left:506px;top:270px">Torsion</div>
<div class="glab" style="left:467px;top:307px">User settings</div>
<!-- stirrups -->
<svg class="abs" style="left:545px;top:236px" width="34" height="34"><defs><linearGradient id="gs1" x1="0" y1="0" x2="1" y2="1"><stop offset="0" stop-color="#ececec"/><stop offset="1" stop-color="#a4a4a4"/></linearGradient></defs><path d="M12 2.500L26 4.500L31.500 30H9.500L3.500 7Z" fill="url(#gs1)"/><path d="M7 15L17 7.500L24.500 8.500L28.500 27H10.500Z" fill="none" stroke="#ff0000" stroke-width="1.100" stroke-linejoin="round"/></svg>
<div class="abs" style="left:546px;top:241.0px;width:15px;height:5px;background:#5b8fd6"></div><div class="abs" style="left:551.0px;top:236px;width:5px;height:15px;background:#5b8fd6"></div>
<div class="t c" style="left:561px;top:271px;line-height:13px">Stirrups,<br>links<span style="font-size:10px"> ▾</span></div>
<!-- longitudinal -->
<div class="hl" style="left:589px;top:233px;width:72.500px;height:71px;background:#c6c6c6"></div>
<svg class="abs" style="left:608px;top:236px" width="34" height="34"><defs><linearGradient id="gs2" x1="0" y1="0" x2=".6" y2="1"><stop offset="0" stop-color="#f2f2f2"/><stop offset=".55" stop-color="#d8d8d8"/><stop offset="1" stop-color="#aaaaaa"/></linearGradient></defs><path d="M3 3.500L24.500 4.500L31.500 30.500H8L1.500 18Z" fill="url(#gs2)"/><g fill="#ff0000"><rect x="15" y="16" width="2.200" height="2.200"/><rect x="9" y="26.200" width="2.200" height="2.200"/><rect x="14.300" y="26.200" width="2.200" height="2.200"/><rect x="19.600" y="26.200" width="2.200" height="2.200"/><rect x="24.900" y="26.200" width="2.200" height="2.200"/></g></svg>
<div class="abs" style="left:609px;top:241.0px;width:15px;height:5px;background:#5b8fd6"></div><div class="abs" style="left:614.0px;top:236px;width:5px;height:15px;background:#5b8fd6"></div>
<div class="t c" style="left:625px;top:271px;line-height:13px">Longitudinal<br>bars<span style="font-size:10px"> ▾</span></div>
<!-- delete all -->
<svg class="abs" style="left:668px;top:235px" width="34" height="34"><path d="M2 2.500H31V8.500H20.500V31.500H11.500V8.500H2Z" fill="#f4dede" stroke="#ee9c9c" stroke-width="1.100"/><path d="M13 5.500H29M16 10V30" stroke="#c8a0a0" stroke-width=".8" stroke-dasharray="2 1.500"/><path d="M1.500 2L13 16M13 2L1.500 16" stroke="#eea2a2" stroke-width="3.600"/></svg>
<div class="t c g" style="left:684px;top:271px;line-height:13px">Delete<br>all</div>
<!-- import export -->
<svg class="abs" style="left:716px;top:234px" width="34" height="36"><path d="M17 3H23L24.500 5H33V16H17Z" fill="#d8d040" stroke="#b0a820" stroke-width=".7"/><rect x="18" y="6.500" width="14" height="9" fill="#f0ea60"/><path d="M4 14H26V19H18.500V34H11.500V19H4Z" fill="#a8a8a8" stroke="#5a5a5a" stroke-width=".8"/><rect x="5" y="15" width="20" height="2" fill="#d8d8d8"/><rect x="13" y="20" width="3.500" height="13" fill="#dcdcdc"/><path d="M5 13C4 6 9 3 14 5" fill="none" stroke="#e03030" stroke-width="2.200"/><path d="M12.500 1.500L17.500 6.500L11.500 8.500Z" fill="#e03030"/></svg>
<div class="t c" style="left:732px;top:271px;line-height:13px">Import,<br>export<span style="font-size:10px"> ▾</span></div>
<!-- view settings -->
<div class="hl" style="left:768px;top:233px;width:58px;height:24px;background:#c6c6c6"></div>
<div class="hl" style="left:768px;top:281px;width:104px;height:23px;background:#c6c6c6"></div>
<div class="hl" style="left:875px;top:233px;width:63px;height:71px;background:#c6c6c6"></div>
<svg class="abs" style="left:770px;top:235px" width="18" height="18"><path d="M1 1.500H16V5H11V16H6.500V5H1Z" fill="#d8d8d8" stroke="#6a6a6a" stroke-width=".9"/><path d="M2.500 3H14.500" stroke="#c06060" stroke-width=".8" stroke-dasharray="1.500 1"/><rect x="7.800" y="13.500" width="1.800" height="1.500" fill="#ff0000"/></svg>
<div class="t" style="left:791px;top:238px;color:#333">Cover</div>
<div class="t b" style="left:771px;top:263px;font-size:11px;color:#000;-webkit-text-stroke:.3px #000">1,2</div>
<div class="t" style="left:791px;top:262px;color:#333">Edges</div>
<svg class="abs" style="left:770px;top:283px" width="18" height="18"><path d="M1 1.500H16V5H11V16H6.500V5H1Z" fill="#f6e0e0" stroke="#e05050" stroke-width=".9"/><path d="M2.500 3.200H14.500M8.700 5V15" stroke="#e05050" stroke-width=".7" stroke-dasharray="1.500 1"/></svg>
<div class="t" style="left:791px;top:286px;color:#333">Reinforcement</div>
<svg class="abs" style="left:889px;top:234px" width="36" height="36"><path d="M11.500 11.500H30V17H24V30.500H17.500V17H11.500Z" fill="#e6e6e6" stroke="#333" stroke-width="1.100"/><path d="M13 13H28.500M19 17.500V29H22.500V17.500" fill="none" stroke="#d05050" stroke-width=".7" stroke-dasharray="1.300 1"/><path d="M6 10.500V31M3 8L9.500 12.500M2.500 30H9.500M4 28L6 31.500L8 28M10.500 5.500H30.500M9 8L12.500 2.500M28.500 8L32 2.500" fill="none" stroke="#ff0000" stroke-width=".9"/></svg>
<div class="t c" style="left:906.500px;top:271px;line-height:13px;color:#333">Dimension<br>lines</div>
<div class="glab" style="left:853px;top:307px">View settings</div>
<!-- pane toolbar icon -->
<svg class="abs" style="left:51px;top:327px" width="22" height="22"><path d="M2 6.500V2H6.500M2.300 2.300L7 7M20 6.500V2H15.500M19.700 2.300L15 7M2 15.500V20H6.500M2.300 19.700L7 15M20 15.500V20H15.500M19.700 19.700L15 15" fill="none" stroke="#fff" stroke-width="1.300"/></svg>

<svg class="abs" style="left:33px;top:349px" width="693" height="694" viewBox="33 349 693 694" font-family="Liberation Sans, sans-serif" font-size="15" fill="#000">
 <path d="M249 448H452.5V536.8L377 557.9V780L452.5 801.4V890.3H249V801.4L324.4 780V557.9L249 536.8Z" fill="#f0f0f0" stroke="#1a1a1a" stroke-width="1"/>
 <path d="M252 451H449.5V534.5999999999999L374 556.4V781.5L449.5 803.6V887.3H252V803.6L327.4 781.5V556.4L252 534.5999999999999Z" fill="none" stroke="#1a1a1a" stroke-width="1" stroke-dasharray="11 5"/>
 <path d="M350.3 424V912.7M207 669.5H484" stroke="#1a1a1a" stroke-width=".9" stroke-dasharray="20 3.500 2 3.500" fill="none"/>
 <path d="M350.3 404.500L352.90000000000003 424.500H347.7ZM496.200 669.5L478 672.3V666.7Z" fill="#000"/>
 <text x="350.3" y="401" text-anchor="middle" font-size="14">z</text>
 <text x="497" y="669" font-size="14">y</text>
 <g stroke="#1a1a1a" stroke-width="1" fill="none">
  <path d="M153.3 448V890.3M183.7 448V890.3M213.6 448V890.3"/>
  <path d="M145.3 448H158.3M175.7 448H188.7M205.6 448H229.6M145.3 890.3H158.3M175.7 890.3H188.7M205.6 890.3H229.6"/>
  <path d="M183.7 536.8H198.7M183.7 557.9H198.7M183.7 780H198.7M183.7 801.4H198.7M205.6 669.5H218.6"/>
  <path d="M249 925V998M452.5 925V998M324.4 925V968.500M377 925V968.500M244 960.8H457.5M244 991H457.5"/>
 </g>
 <path d="M148.8 443.5L157.8 452.5M148.8 885.8L157.8 894.8M179.2 443.5L188.2 452.5M179.2 885.8L188.2 894.8M209.1 443.5L218.1 452.5M209.1 885.8L218.1 894.8M179.2 532.3L188.2 541.3M179.2 553.4L188.2 562.4M179.2 775.5L188.2 784.5M179.2 796.9L188.2 805.9M209.1 665.0L218.1 674.0M244.5 965.3L253.5 956.3M319.9 965.3L328.9 956.3M372.5 965.3L381.5 956.3M448.0 965.3L457.0 956.3M244.5 995.5L253.5 986.5M448.0 995.5L457.0 986.5" stroke="#000" stroke-width="1.700" fill="none"/>
 <text x="178.5" y="491" transform="rotate(-90 178.5 491)" text-anchor="middle">1000</text><text x="178.5" y="547.6" transform="rotate(-90 178.5 547.6)" text-anchor="middle">250</text><text x="208.8" y="558.8" transform="rotate(-90 208.8 558.8)" text-anchor="middle">2500</text>
 <text x="147.8" y="668.9" transform="rotate(-90 147.8 668.9)" text-anchor="middle">5000</text><text x="178.5" y="668.9" transform="rotate(-90 178.5 668.9)" text-anchor="middle">2500</text>
 <text x="178.5" y="790.7" transform="rotate(-90 178.5 790.7)" text-anchor="middle">250</text><text x="208.8" y="780" transform="rotate(-90 208.8 780)" text-anchor="middle">2500</text><text x="178.5" y="845" transform="rotate(-90 178.5 845)" text-anchor="middle">1000</text>
 <text x="286.500" y="958" text-anchor="middle">850</text>
 <text x="350.500" y="958" text-anchor="middle">600</text>
 <text x="414.500" y="958" text-anchor="middle">850</text>
 <text x="350.500" y="988" text-anchor="middle">2300</text>
</svg>
<!-- left nav -->
<svg class="abs" style="left:618px;top:381px" width="100" height="22"><path d="M0 0H84L98 10.500L84 21H0Z" fill="#f07020"/></svg>
<div class="t b" style="left:628px;top:385px;color:#fff">Cover</div>
<div class="t b" style="left:628px;top:407px;color:#333">Stirrups</div>
<div class="t b" style="left:628px;top:429px;color:#333">Reinforcement</div>


<div class="abs" style="left:743px;top:361px;width:10px;height:10px;background:#e4e4e4;border-radius:2px"></div>
<div class="t" style="left:759px;top:360px;color:#111">Base edges</div>
<div class="abs" style="left:742px;top:384px;width:206px;height:382px;background:#fff;border:1px solid #a8a8a8;border-bottom:2px solid #a8a8a8"></div>
<div class="abs" style="left:743px;top:385px;width:204px;height:32px;background:#f0f0f0"></div>
<div class="abs" style="left:743px;top:418px;width:204px;height:28px;background:#e4e4e4"></div>
<div class="abs" style="left:771px;top:385px;width:1px;height:380px;background:#a8a8a8"></div><div class="abs" style="left:810px;top:385px;width:1px;height:380px;background:#a8a8a8"></div><div class="abs" style="left:889px;top:385px;width:1px;height:380px;background:#a8a8a8"></div><div class="abs" style="left:743px;top:417px;width:204px;height:1px;background:#a8a8a8"></div><div class="t" style="left:776px;top:426px;color:#222">1</div><div class="t" style="left:815px;top:426px;color:#222">30</div><div class="abs" style="left:743px;top:446px;width:204px;height:1px;background:#a8a8a8"></div><div class="t" style="left:776px;top:455px;color:#222">2</div><div class="t" style="left:815px;top:455px;color:#222">30</div><div class="abs" style="left:743px;top:475px;width:204px;height:1px;background:#a8a8a8"></div><div class="t" style="left:776px;top:484px;color:#222">3</div><div class="t" style="left:815px;top:484px;color:#222">30</div><div class="abs" style="left:743px;top:504px;width:204px;height:1px;background:#a8a8a8"></div><div class="t" style="left:776px;top:513px;color:#222">4</div><div class="t" style="left:815px;top:513px;color:#222">30</div><div class="abs" style="left:743px;top:533px;width:204px;height:1px;background:#a8a8a8"></div><div class="t" style="left:776px;top:542px;color:#222">5</div><div class="t" style="left:815px;top:542px;color:#222">30</div><div class="abs" style="left:743px;top:562px;width:204px;height:1px;background:#a8a8a8"></div><div class="t" style="left:776px;top:571px;color:#222">6</div><div class="t" style="left:815px;top:571px;color:#222">30</div><div class="abs" style="left:743px;top:591px;width:204px;height:1px;background:#a8a8a8"></div><div class="t" style="left:776px;top:600px;color:#222">7</div><div class="t" style="left:815px;top:600px;color:#222">30</div><div class="abs" style="left:743px;top:620px;width:204px;height:1px;background:#a8a8a8"></div><div class="t" style="left:776px;top:629px;color:#222">8</div><div class="t" style="left:815px;top:629px;color:#222">30</div><div class="abs" style="left:743px;top:649px;width:204px;height:1px;background:#a8a8a8"></div><div class="t" style="left:776px;top:658px;color:#222">9</div><div class="t" style="left:815px;top:658px;color:#222">30</div><div class="abs" style="left:743px;top:678px;width:204px;height:1px;background:#a8a8a8"></div><div class="t" style="left:776px;top:687px;color:#222">10</div><div class="t" style="left:815px;top:687px;color:#222">30</div><div class="abs" style="left:743px;top:707px;width:204px;height:1px;background:#a8a8a8"></div><div class="t" style="left:776px;top:716px;color:#222">11</div><div class="t" style="left:815px;top:716px;color:#222">30</div><div class="abs" style="left:743px;top:736px;width:204px;height:1px;background:#a8a8a8"></div><div class="t" style="left:776px;top:745px;color:#222">12</div><div class="t" style="left:815px;top:745px;color:#222">30</div><div class="t b" style="left:776px;top:395px;color:#222">Type</div><div class="t b" style="left:815px;top:395px;color:#222">Cover [mm]</div><svg class="abs" style="left:751px;top:426px" width="10" height="12"><path d="M2.500 1.500L7 6L2.500 10.500" fill="none" stroke="#222" stroke-width="1.300"/></svg>
<div class="abs" style="left:589px;top:305px;width:122px;height:92px;background:#fff;border:1px solid #b4b4b4"></div>
<svg class="abs" style="left:594px;top:311px" width="16" height="16"><path d="M3.500 2H12.500L15.500 15.500H4.500Z" fill="#c8c8c8"/><path d="M3 2H11.500L14.500 14.500H4Z" fill="#e6e6e6"/><rect x="7.4" y="6.4" width="1.300" height="1.300" fill="#ff0000"/><rect x="3.4" y="12.4" width="1.300" height="1.300" fill="#ff0000"/><rect x="6.4" y="12.4" width="1.300" height="1.300" fill="#ff0000"/><rect x="9.4" y="12.4" width="1.300" height="1.300" fill="#ff0000"/><rect x="12.4" y="12.4" width="1.300" height="1.300" fill="#ff0000"/><path d="M0.500 3.500H7M3.700 0.500V6.800" stroke="#5b8fd6" stroke-width="2.200"/></svg><div class="t" style="left:614px;top:312.0px;color:#222">New in line</div><svg class="abs" style="left:594px;top:333px" width="16" height="16"><path d="M3.500 2H12.500L15.500 15.500H4.500Z" fill="#c8c8c8"/><path d="M3 2H11.500L14.500 14.500H4Z" fill="#e6e6e6"/><rect x="7.4" y="3.4" width="1.300" height="1.300" fill="#ff0000"/><rect x="10.4" y="3.9" width="1.300" height="1.300" fill="#ff0000"/><rect x="12.9" y="4.4" width="1.300" height="1.300" fill="#ff0000"/><path d="M0.500 3.500H7M3.700 0.500V6.800" stroke="#5b8fd6" stroke-width="2.200"/></svg><div class="t" style="left:614px;top:334.0px;color:#222">New on edge</div><svg class="abs" style="left:594px;top:355px" width="16" height="16"><path d="M3.500 2H12.500L15.500 15.500H4.500Z" fill="#c8c8c8"/><path d="M3 2H11.500L14.500 14.500H4Z" fill="#e6e6e6"/><rect x="7.4" y="3.4" width="1.300" height="1.300" fill="#ff0000"/><rect x="10.4" y="3.9" width="1.300" height="1.300" fill="#ff0000"/><rect x="12.9" y="4.4" width="1.300" height="1.300" fill="#ff0000"/><rect x="3.4" y="8.4" width="1.300" height="1.300" fill="#ff0000"/><rect x="3.4" y="12.4" width="1.300" height="1.300" fill="#ff0000"/><rect x="6.4" y="12.4" width="1.300" height="1.300" fill="#ff0000"/><rect x="9.4" y="12.4" width="1.300" height="1.300" fill="#ff0000"/><rect x="12.4" y="12.4" width="1.300" height="1.300" fill="#ff0000"/><rect x="13.4" y="8.4" width="1.300" height="1.300" fill="#ff0000"/><path d="M0.500 3.500H7M3.700 0.500V6.800" stroke="#5b8fd6" stroke-width="2.200"/></svg><div class="t" style="left:614px;top:356.0px;color:#222">New on all edges</div><svg class="abs" style="left:594px;top:377px" width="16" height="16"><path d="M6.500 2H10.500V4.500H9.500V15H7.500V4.500H6.500Z" fill="#e0e0e0" stroke="#b0b0b0" stroke-width=".7"/><path d="M1 3H7M4 0.500V6" stroke="#b8d0ee" stroke-width="2"/></svg><div class="t" style="left:614px;top:378.0px;color:#a8a8a8">Explode layer</div>
<!-- buttons -->
<div class="abs" style="left:804px;top:1049px;width:150px;height:22px;background:#9b9b9b"></div>
<div class="t c" style="left:841px;top:1054px;color:#fff">OK</div>
<div class="t c" style="left:916px;top:1054px;color:#fff">Cancel</div>
</div></div>

<div class="abs" style="left:921px;top:62px;width:63px;height:74.500px;border:4px solid #ff0000;border-radius:11px"></div><div class="abs" style="left:583px;top:225px;width:84px;height:84px;border:4px solid #ff0000;border-radius:11px"></div><div class="abs" style="left:585px;top:346px;width:128px;height:32.5px;border:4px solid #ff0000;border-radius:9px"></div><div class="abs" style="left:1310px;top:323px;width:134px;height:33.5px;border:4px solid #ff0000;border-radius:10px"></div>
<div class="t" style="left:918.7px;top:16.3px;font-size:38.4px;line-height:44.1px;color:#ff0000;-webkit-text-stroke:.4px #ff0000;transform:translateX(-50%) scaleX(1.08)">2</div><div class="t" style="left:560.5px;top:197.5px;font-size:36.0px;line-height:41.3px;color:#ff0000;-webkit-text-stroke:.4px #ff0000;transform:translateX(-50%) scaleX(1.08)">3</div><div class="t" style="left:560.8px;top:374.1px;font-size:36.4px;line-height:41.8px;color:#ff0000;-webkit-text-stroke:.4px #ff0000;transform:translateX(-50%) scaleX(1.08)">4</div><div class="t" style="left:1443.7px;top:363.3px;font-size:33.9px;line-height:39.0px;color:#ff0000;-webkit-text-stroke:.4px #ff0000;transform:translateX(-50%) scaleX(1.08)">1</div><div id="botline"></div>
</body>
</html>
